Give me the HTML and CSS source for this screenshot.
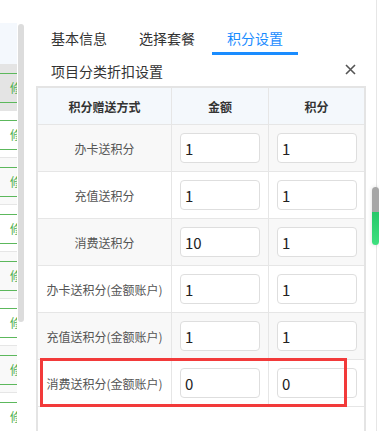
FILE: index.html
```html
<!DOCTYPE html>
<html lang="zh-CN">
<head>
  <meta charset="UTF-8">
  <meta name="viewport" content="width=device-width, initial-scale=1.0">
  <title>积分设置</title>
  <link rel="stylesheet" href="styles.css">
</head>
<body>
  <div class="page">
    <aside class="list">
      <div class="list__body">
        <div class="list__head"></div>
        <div class="list__row list__row--hover"><span class="list__btn">修改</span></div>
        <div class="list__row"><span class="list__btn">修改</span></div>
        <div class="list__row list__row--odd"><span class="list__btn">修改</span></div>
        <div class="list__row"><span class="list__btn">修改</span></div>
        <div class="list__row list__row--odd"><span class="list__btn">修改</span></div>
        <div class="list__row"><span class="list__btn">修改</span></div>
        <div class="list__row list__row--odd"><span class="list__btn">修改</span></div>
        <div class="list__row"><span class="list__btn">修改</span></div>
      </div>
      <div class="list__bar"></div>
    </aside>

    <section class="panel">
      <nav class="tabs">
        <a class="tabs__item">基本信息</a>
        <a class="tabs__item">选择套餐</a>
        <a class="tabs__item tabs__item--active">积分设置</a>
      </nav>
      <div class="panel__title">
        <span>项目分类折扣设置</span>
        <svg class="panel__close" width="11" height="11" viewBox="0 0 11 11">
          <path d="M1 1 L10 10 M10 1 L1 10" stroke="#555" stroke-width="1.6" fill="none"/>
        </svg>
      </div>

      <div class="grid">
        <div class="grid__row grid__row--head">
          <div class="grid__cell">积分赠送方式</div>
          <div class="grid__cell">金额</div>
          <div class="grid__cell">积分</div>
        </div>
        <div class="grid__row grid__row--odd">
          <div class="grid__cell grid__label">办卡送积分</div>
          <div class="grid__cell"><input class="grid__input" value="1"></div>
          <div class="grid__cell"><input class="grid__input" value="1"></div>
        </div>
        <div class="grid__row">
          <div class="grid__cell grid__label">充值送积分</div>
          <div class="grid__cell"><input class="grid__input" value="1"></div>
          <div class="grid__cell"><input class="grid__input" value="1"></div>
        </div>
        <div class="grid__row grid__row--odd">
          <div class="grid__cell grid__label">消费送积分</div>
          <div class="grid__cell"><input class="grid__input" value="10"></div>
          <div class="grid__cell"><input class="grid__input" value="1"></div>
        </div>
        <div class="grid__row">
          <div class="grid__cell grid__label">办卡送积分(金额账户)</div>
          <div class="grid__cell"><input class="grid__input" value="1"></div>
          <div class="grid__cell"><input class="grid__input" value="1"></div>
        </div>
        <div class="grid__row grid__row--odd">
          <div class="grid__cell grid__label">充值送积分(金额账户)</div>
          <div class="grid__cell"><input class="grid__input" value="1"></div>
          <div class="grid__cell"><input class="grid__input" value="1"></div>
        </div>
        <div class="grid__row grid__row--marked">
          <div class="grid__cell grid__label">消费送积分(金额账户)</div>
          <div class="grid__cell"><input class="grid__input" value="0"></div>
          <div class="grid__cell"><input class="grid__input" value="0"></div>
          <div class="mark"></div>
        </div>
      </div>
    </section>

    <div class="gutter">
      <div class="gutter__thumb"></div>
    </div>
  </div>
</body>
</html>
```

FILE: styles.css
```css
* { box-sizing: border-box; }
body {
  margin: 0;
  font-family: "Noto Sans CJK SC", "Noto Sans", sans-serif;
  color: #333;
  background: #fff;
  overflow: hidden;
}
.page {
  display: flex;
  height: 431px;
  overflow: hidden;
}

/* left list behind the dialog */
.list {
  display: flex;
  width: 24px;
  flex: none;
}
.list__body {
  width: 17px;
  overflow: hidden;
  padding-top: 23px;
}
.list__head {
  height: 41px;
  background: #f4f8fd;
}
.list__row {
  height: 47px;
  padding-top: 9px;
  border-bottom: 1px solid #e6e6e6;
  background: #fff;
}
.list__row--hover { background: #e4e4e4; border-bottom-color: #e4e4e4; }
.list__row--odd { background: #f9f9f9; }
.list__btn {
  display: block;
  margin-left: -10px;
  width: 60px;
  height: 30px;
  padding-left: 20px;
  border-top: 1px solid #5cb85c;
  border-bottom: 1px solid #5cb85c;
  color: #4caf50;
  font-size: 12px;
  line-height: 28px;
  white-space: nowrap;
}
.list__bar {
  width: 6px;
  height: 298px;
  margin: 24px 0 0 1px;
  background: #dcdcdc;
  border-radius: 3px;
}

/* dialog */
.panel {
  position: relative;
  width: 330px;
  flex: none;
  margin-left: 12px;
  display: flex;
  flex-direction: column;
}
.tabs {
  display: flex;
  gap: 2px;
  margin-top: 28px;
}
.tabs__item {
  width: 86px;
  padding-bottom: 4px;
  border-bottom: 3px solid transparent;
  text-align: center;
  font-size: 14px;
  line-height: 20px;
  color: #333;
}
.tabs__item--active {
  color: #1a8cff;
  border-bottom-color: #1a8cff;
}
.panel__title {
  display: flex;
  justify-content: space-between;
  align-items: center;
  margin-top: 6px;
  padding: 0 10px 0 15px;
  height: 20px;
  font-size: 14px;
  line-height: 20px;
}
.panel__close { display: block; margin-top: -4px; }

.grid {
  margin-top: 5px;
  flex: 1;
  border: 2px solid #e4e4e4;
  border-bottom: none;
}
.grid__row {
  position: relative;
  display: grid;
  grid-template-columns: 134px 97px 1fr;
  height: 47px;
  border-bottom: 1px solid #e6e6e6;
  background: #fff;
}
.grid__row--odd { background: #f8f8f8; }
.grid__row--head {
  height: 37px;
  background: #f4f8fc;
  font-weight: bold;
  color: #333;
}
.grid__cell {
  display: flex;
  align-items: center;
  justify-content: center;
  border-right: 1px solid #e6e6e6;
  font-size: 12px;
}
.grid__cell:nth-child(3) { border-right: none; }
.grid__row .grid__cell:nth-child(2),
.grid__row .grid__cell:nth-child(3) { justify-content: flex-start; padding-left: 8px; }
.grid__row--head .grid__cell:nth-child(2),
.grid__row--head .grid__cell:nth-child(3) { justify-content: center; padding-left: 0; }
.grid__label { color: #555; white-space: nowrap; }
.grid__input {
  width: 80px;
  height: 30px;
  padding: 0 4px;
  border: 1px solid #dedede;
  border-radius: 4px;
  background: #fff;
  font-family: "Noto Sans CJK SC", "Noto Sans", sans-serif;
  font-size: 15px;
  color: #222;
  outline: none;
}
.mark {
  position: absolute;
  left: 2px;
  top: -2px;
  width: 307px;
  height: 49px;
  border: 3px solid #f23a3a;
  pointer-events: none;
}

/* page scrollbar on the right */
.gutter {
  position: relative;
  flex: 1;
}
.gutter::before {
  content: "";
  position: absolute;
  left: 10px;
  top: 0;
  bottom: 0;
  width: 1px;
  background: #e6e6e6;
}
.gutter__thumb {
  position: absolute;
  left: 6px;
  top: 187px;
  width: 7px;
  height: 58px;
  border-radius: 4px;
  background: linear-gradient(#a6a6a6 0, #a6a6a6 43%, #27c86a 43%, #3ee07f 100%);
  box-shadow: 0 0 4px rgba(0, 0, 0, 0.15);
}
```
